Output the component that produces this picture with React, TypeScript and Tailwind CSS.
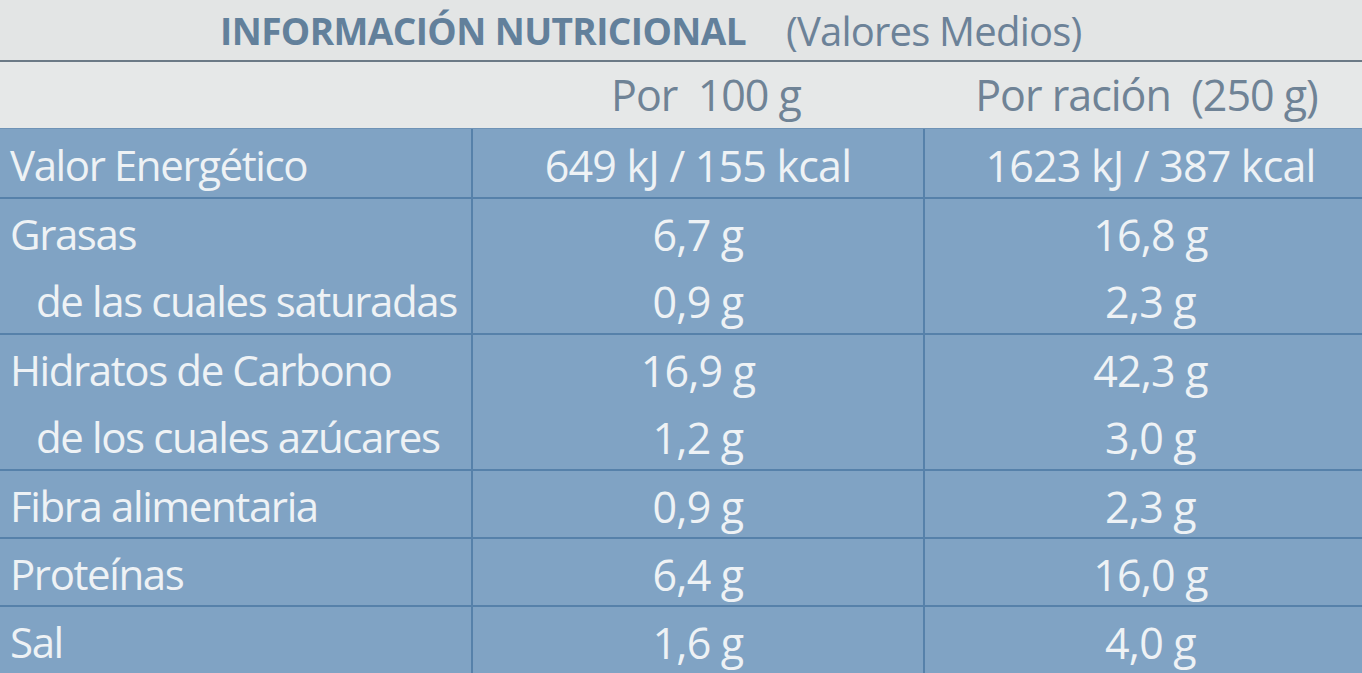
const ROWS: { label: string; per100: string; perServing: string; indent?: boolean; line?: boolean }[] = [
  { label: "Valor Energético", per100: "649 kJ / 155 kcal", perServing: "1623 kJ / 387 kcal" },
  { label: "Grasas", per100: "6,7 g", perServing: "16,8 g", line: true },
  { label: "de las cuales saturadas", per100: "0,9 g", perServing: "2,3 g", indent: true },
  { label: "Hidratos de Carbono", per100: "16,9 g", perServing: "42,3 g", line: true },
  { label: "de los cuales azúcares", per100: "1,2 g", perServing: "3,0 g", indent: true },
  { label: "Fibra alimentaria", per100: "0,9 g", perServing: "2,3 g", line: true },
  { label: "Proteínas", per100: "6,4 g", perServing: "16,0 g", line: true },
  { label: "Sal", per100: "1,6 g", perServing: "4,0 g", line: true },
];

export default function App() {
  return (
    <div className="w-[1362px] h-[673px] overflow-hidden bg-[#e3e5e5] font-['Open_Sans',sans-serif]">
      <div className="h-[62px] flex items-center pl-[220px] pt-[2px] text-[#62809b] border-b-2 border-[#6c7a86]">
        <span className="text-[37px] font-bold tracking-[-0.6px]">INFORMACIÓN NUTRICIONAL</span>
        <span className="text-[40px] ml-[40px] text-[#6c8298] tracking-[-0.8px]">(Valores Medios)</span>
      </div>
      <div className="h-[66px] grid grid-cols-[473px_452px_1fr] items-center text-[43px] text-[#6f8396] tracking-[-1px] bg-[#e6e8e8]">
        <div />
        <div className="text-center pl-[14px]">Por&nbsp; 100 g</div>
        <div className="text-center pl-[6px]">Por ración&nbsp; (250 g)</div>
      </div>
      <div className="bg-[#80a3c4] border-t border-[#6f93b6]">
        {ROWS.map((r) => (
          <div
            key={r.label}
            className={`h-[68px] grid grid-cols-[473px_452px_1fr] text-[42px] leading-none text-[#eef2f5] ${
              r.line ? "border-t-2 border-[#5681aa]" : ""
            }`}
          >
            <div
              className={`flex items-center pt-[4px] tracking-[-1.4px] border-r-2 border-[#5681aa] ${
                r.indent ? "pl-[36px]" : "pl-[10px]"
              }`}
            >
              {r.label}
            </div>
            <div className="flex items-center justify-center pt-[4px] text-[43px] tracking-[-0.8px] border-r-2 border-[#5681aa]">
              {r.per100}
            </div>
            <div className="flex items-center justify-center pt-[4px] text-[43px] tracking-[-0.8px] pl-[14px]">
              {r.perServing}
            </div>
          </div>
        ))}
      </div>
    </div>
  );
}
